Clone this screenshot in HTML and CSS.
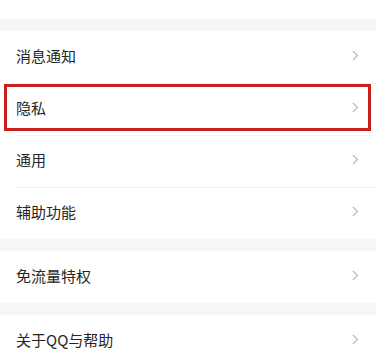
FILE: index.html
```html
<!DOCTYPE html>
<html>
<head>
    <title>设置</title>
    <link rel="stylesheet" href="styles.css">
</head>
<body>

<div class="page">
    <div class="group first">
        <div class="row"><span>账号安全</span></div>
    </div>

    <div class="group">
        <div class="row">
            <span>消息通知</span>
            <svg class="arrow" width="7" height="11" viewBox="0 0 7 11"><polyline points="1,1 5.5,5.5 1,10"/></svg>
        </div>
        <div class="row">
            <span>隐私</span>
            <svg class="arrow" width="7" height="11" viewBox="0 0 7 11"><polyline points="1,1 5.5,5.5 1,10"/></svg>
            <!-- выделение -->
            <div class="mark"></div>
        </div>
        <div class="row">
            <span>通用</span>
            <svg class="arrow" width="7" height="11" viewBox="0 0 7 11"><polyline points="1,1 5.5,5.5 1,10"/></svg>
        </div>
        <div class="row">
            <span>辅助功能</span>
            <svg class="arrow" width="7" height="11" viewBox="0 0 7 11"><polyline points="1,1 5.5,5.5 1,10"/></svg>
        </div>
    </div>

    <div class="group">
        <div class="row">
            <span>免流量特权</span>
            <svg class="arrow" width="7" height="11" viewBox="0 0 7 11"><polyline points="1,1 5.5,5.5 1,10"/></svg>
        </div>
    </div>

    <div class="group">
        <div class="row">
            <span>关于QQ与帮助</span>
            <svg class="arrow" width="7" height="11" viewBox="0 0 7 11"><polyline points="1,1 5.5,5.5 1,10"/></svg>
        </div>
    </div>
</div>

</body>
</html>
```

FILE: styles.css
```css
body {
    margin: 0;
    background: #f5f6f8;
    font-family: "Noto Sans CJK SC", "Noto Sans", sans-serif;
    font-size: 15px;
    color: #262626;
    overflow: hidden;
}

.page {
    display: flex;
    flex-direction: column;
    gap: 12px;
}

.group {
    background: #fff;
}

.group.first {
    margin-top: -33px;
}

.row {
    position: relative;
    height: 52px;
    box-sizing: border-box;
    display: flex;
    align-items: center;
    justify-content: space-between;
    padding: 0 16px 4px;
}

.row + .row::before {
    content: "";
    position: absolute;
    top: 0;
    left: 16px;
    right: 0;
    border-top: 1px solid #f3f3f5;
}

.arrow {
    margin-right: 1px;
}

.arrow polyline {
    fill: none;
    stroke: #b9b9b9;
    stroke-width: 1.2;
}

.mark {
    position: absolute;
    top: 1px;
    left: 4px;
    right: 5px;
    height: 47px;
    box-sizing: border-box;
    border: 3px solid #c8211d;
}
```
